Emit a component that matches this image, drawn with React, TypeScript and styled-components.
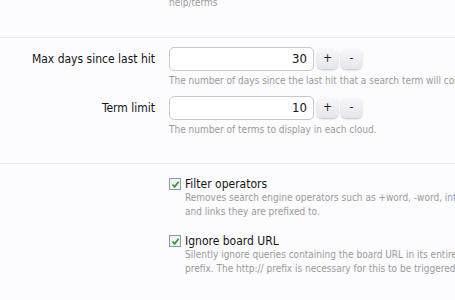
import React from 'react';
import styled, { createGlobalStyle } from 'styled-components';

const GlobalStyle = createGlobalStyle`
  html, body {
    margin: 0;
    padding: 0;
    background: #fcfcff;
    overflow: hidden;
  }
  body {
    font-family: 'DejaVu Sans Condensed', 'DejaVu Sans', Tahoma, sans-serif;
    font-stretch: condensed;
    color: #141414;
  }
`;

const Page = styled.div`
  width: 455px;
  height: 300px;
  overflow: hidden;
  background: #fcfcff;
`;

const Section = styled.div<{ $pad: string }>`
  padding: ${(p) => p.$pad};
  border-bottom: 1px solid #d8eef0;
  &:last-child {
    border-bottom: 0;
  }
`;

const Row = styled.div`
  display: grid;
  grid-template-columns: 169px 1fr;
  margin-bottom: 8px;
`;

const Label = styled.div`
  text-align: right;
  padding-right: 14px;
  padding-top: 4px;
  font-size: 12px;
  line-height: 16px;
  white-space: nowrap;
`;

const Field = styled.div`
  min-width: 0;
`;

const SpinBox = styled.div`
  display: flex;
  align-items: center;
  gap: 3px;
`;

const NumberInput = styled.div`
  box-sizing: border-box;
  width: 145px;
  height: 24px;
  border: 1px solid #c8c8c8;
  border-radius: 5px;
  background: #fff;
  text-align: right;
  padding: 0 6px;
  font-size: 13px;
  line-height: 22px;
`;

const SpinButton = styled.div`
  box-sizing: border-box;
  width: 21px;
  height: 20px;
  border-radius: 5px;
  background: linear-gradient(#f6f7fa, #e4e6ec);
  box-shadow: 0 1px 2px rgba(0, 0, 0, 0.25);
  text-align: center;
  font-size: 12px;
  line-height: 19px;
  color: #222;
`;

const Hint = styled.div`
  font-size: 10px;
  line-height: 14px;
  color: #9a9a9a;
  white-space: nowrap;
  margin-top: 3px;
`;

const TopHint = styled(Hint)`
  padding-left: 169px;
  margin-top: -4px;
`;

const CheckRow = styled.div`
  padding-left: 169px;
  margin-bottom: 15px;
`;

const CheckLabel = styled.div`
  display: flex;
  align-items: center;
  gap: 4px;
  font-size: 12px;
  line-height: 14px;
`;

const Box = styled.span`
  box-sizing: border-box;
  width: 12px;
  height: 12px;
  border: 1px solid #8a9aa8;
  background: #eef3f6;
  display: inline-flex;
  align-items: center;
  justify-content: center;
`;

const CheckHint = styled(Hint)`
  padding-left: 16px;
  margin-top: 0;
  line-height: 14px;
`;

const Check = () => (
  <Box>
    <svg width="9" height="9" viewBox="0 0 9 9">
      <path d="M1.5 4.5 L3.6 6.8 L7.6 1.8" stroke="#2e9b2e" strokeWidth="1.8" fill="none" />
    </svg>
  </Box>
);

export default function App() {
  return (
    <Page>
      <GlobalStyle />
      <Section $pad="0 0 27px 0">
        <TopHint>help/terms</TopHint>
      </Section>
      <Section $pad="9px 0 18px 0">
        <Row>
          <Label>Max days since last hit</Label>
          <Field>
            <SpinBox>
              <NumberInput>30</NumberInput>
              <SpinButton>+</SpinButton>
              <SpinButton>-</SpinButton>
            </SpinBox>
            <Hint>The number of days since the last hit that a search term will continue to be shown.</Hint>
          </Field>
        </Row>
        <Row>
          <Label>Term limit</Label>
          <Field>
            <SpinBox>
              <NumberInput>10</NumberInput>
              <SpinButton>+</SpinButton>
              <SpinButton>-</SpinButton>
            </SpinBox>
            <Hint>The number of terms to display in each cloud.</Hint>
          </Field>
        </Row>
      </Section>
      <Section $pad="13px 0 0 0">
        <CheckRow>
          <CheckLabel>
            <Check />
            Filter operators
          </CheckLabel>
          <CheckHint>
            Removes search engine operators such as +word, -word, intitle:word
            <br />
            and links they are prefixed to.
          </CheckHint>
        </CheckRow>
        <CheckRow>
          <CheckLabel>
            <Check />
            Ignore board URL
          </CheckLabel>
          <CheckHint>
            Silently ignore queries containing the board URL in its entirety, including the
            <br />
            prefix. The http:// prefix is necessary for this to be triggered.
          </CheckHint>
        </CheckRow>
      </Section>
    </Page>
  );
}
